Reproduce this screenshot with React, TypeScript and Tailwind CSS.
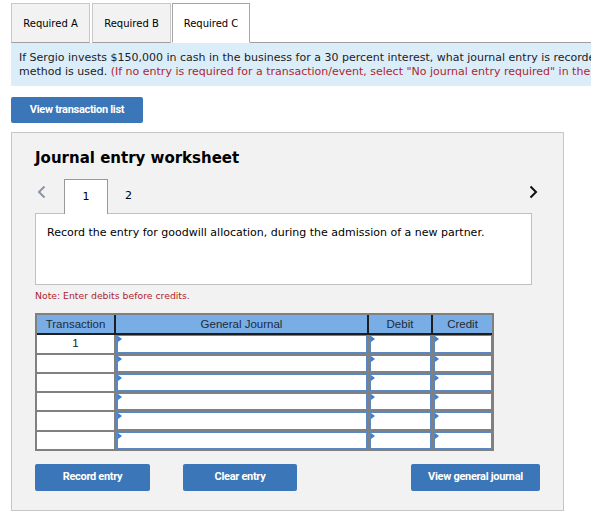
import React from 'react';

const verdana = { fontFamily: '"DejaVu Sans", Verdana, sans-serif' };
const arial = { fontFamily: '"Liberation Sans", Arial, sans-serif' };
const btnFont = { fontFamily: 'Roboto, "Liberation Sans", sans-serif' };

const tabs = ['Required A', 'Required B', 'Required C'];

const InputCell: React.FC = () => (
  <div className="relative bg-white border border-[#5b87c0] border-l-2">
    <svg className="absolute left-0 top-0" width="5" height="7" viewBox="0 0 5 7">
      <polygon points="0,0 4,3 0,6" fill="#3b7fd6" />
    </svg>
  </div>
);

const Btn: React.FC<{ label: string; className?: string }> = ({ label, className }) => (
  <button
    style={btnFont}
    className={'h-[27px] rounded-[2px] bg-[#3b76b8] text-white text-[11px] font-bold tracking-[-0.3px] ' + (className ?? '')}
  >
    {label}
  </button>
);

export default function App() {
  const rows = [0, 1, 2, 3, 4, 5];

  return (
    <div className="w-[591px] h-[522px] overflow-hidden bg-white text-[#222]" style={verdana}>
      {/* Tabs */}
      <div className="flex items-end pl-[11px] pt-[3px]">
        {tabs.map((t, i) => {
          const active = i === 2;
          return (
            <div
              key={t}
              className={
                'h-[40px] flex items-center justify-center text-[10px] text-black border ' +
                (active
                  ? 'w-[78px] bg-white border-[#a6a6a6] border-b-white'
                  : 'bg-[#f2f2f2] border-[#c8c8c8] border-b-[#9f9f9f] ' + (i === 0 ? 'w-[79px] mr-[2px]' : 'w-[79px] mr-[1px]'))
              }
            >
              {t}
            </div>
          );
        })}
        <div className="flex-1 border-b border-[#9f9f9f]" />
      </div>

      {/* Info banner */}
      <div className="ml-[11px] h-[43px] bg-[#dcedfa] pl-[8px] pt-[8px] text-[11px] leading-[14px] whitespace-nowrap">
        <div>
          If Sergio invests $150,000 in cash in the business for a 30 percent interest, what journal entry is recorded if the goodwill
        </div>
        <div>
          method is used.{' '}
          <span className="text-[#b0252f]">
            (If no entry is required for a transaction/event, select "No journal entry required" in the first account field.)
          </span>
        </div>
      </div>

      <div className="pl-[11px] pt-[10px]">
        <button
          style={btnFont}
          className="w-[132px] h-[26px] rounded-[2px] bg-[#3b76b8] text-white text-[11px] font-bold tracking-[-0.3px]"
        >
          View transaction list
        </button>
      </div>

      {/* Worksheet panel */}
      <div className="ml-[11px] mt-[9px] w-[553px] h-[379px] bg-[#f2f2f2] border border-[#c6c6c6] pl-[23px] pr-[30px] pt-[15px]">
        <div className="text-[15px] font-bold text-black leading-[20px]">Journal entry worksheet</div>

        <div className="mt-[11px] flex items-end h-[34px]">
          <svg className="mb-[14px] ml-[2px]" width="9" height="14" viewBox="0 0 9 14">
            <polyline points="7.5,1.5 2,7 7.5,12.5" fill="none" stroke="#8a96a3" strokeWidth="2" />
          </svg>
          <div className="ml-[18px] w-[44px] h-[35px] bg-white border border-[#999] border-b-0 flex items-center justify-center text-[11px] text-black relative top-[1px] z-10">
            1
          </div>
          <div className="ml-[17px] h-[34px] flex items-center text-[11px] text-black">2</div>
          <div className="flex-1" />
          <svg className="mb-[14px] mr-[-5px]" width="9" height="14" viewBox="0 0 9 14">
            <polyline points="1.5,1.5 7,7 1.5,12.5" fill="none" stroke="#111" strokeWidth="2" />
          </svg>
        </div>

        <div className="w-[497px] h-[72px] bg-white border border-[#c0c0c0] pl-[11px] pt-[11px] text-[11px] text-black">
          Record the entry for goodwill allocation, during the admission of a new partner.
        </div>

        <div className="mt-[5px] text-[9.3px] text-[#b0252f] leading-[12px]">Note: Enter debits before credits.</div>

        {/* Journal table */}
        <div className="mt-[11px] w-[459px] border-2 border-[#808080] bg-[#808080]" style={arial}>
          <div className="grid grid-cols-[79px_253px_64px_1fr] h-[20px] bg-[#78ade5] border-b-2 border-[#1e1e1e] text-[11.5px] text-[#1e2a3a]">
            <div className="flex items-center justify-center border-r-2 border-[#1e1e1e]">Transaction</div>
            <div className="flex items-center justify-center border-r-2 border-[#1e1e1e]">General Journal</div>
            <div className="flex items-center justify-center border-r-2 border-[#1e1e1e]">Debit</div>
            <div className="flex items-center justify-center">Credit</div>
          </div>
          <div className="flex flex-col gap-[2px]">
            {rows.map(r => (
              <div key={r} className="grid grid-cols-[77px_251px_62px_1fr] gap-x-[2px] h-[17.3px]">
                <div className="bg-white flex items-center justify-center text-[11.5px] text-[#222]">
                  {r === 0 ? '1' : ''}
                </div>
                <InputCell />
                <InputCell />
                <InputCell />
              </div>
            ))}
          </div>
        </div>

        <div className="mt-[13px] flex items-center">
          <Btn label="Record entry" className="w-[115px]" />
          <Btn label="Clear entry" className="w-[114px] ml-[33px]" />
          <div className="flex-1" />
          <Btn label="View general journal" className="w-[129px] mr-[-7px]" />
        </div>
      </div>
    </div>
  );
}
